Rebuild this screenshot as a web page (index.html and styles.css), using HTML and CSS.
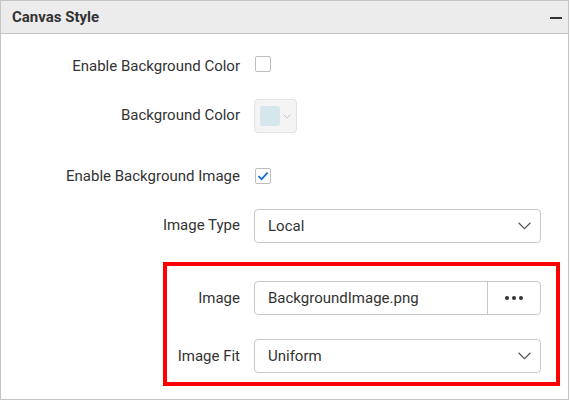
FILE: index.html
```html
<!DOCTYPE html>
<html>
<head>
<meta charset="utf-8">
<link rel="stylesheet" href="styles.css">
</head>
<body>
<div class="panel">
  <div class="header">
    <span class="title">Canvas Style</span>
    <span class="collapse"></span>
  </div>
  <div class="content">
    <div class="row r1">
      <div class="label">Enable Background Color</div>
      <div class="checkbox"></div>
    </div>
    <div class="row r2">
      <div class="label">Background Color</div>
      <div class="colorpicker">
        <span class="swatch"></span>
        <svg class="minichev" width="8" height="5" viewBox="0 0 8 5"><path d="M0.5 0.5 L4 4 L7.5 0.5" fill="none" stroke="#c9c9c9" stroke-width="1"/></svg>
      </div>
    </div>
    <div class="row r3">
      <div class="label">Enable Background Image</div>
      <div class="checkbox">
        <svg width="14" height="14" viewBox="0 0 14 14"><path d="M2.5 7.2 L5.6 10.2 L11.6 3.6" fill="none" stroke="#1a6fd6" stroke-width="1.8"/></svg>
      </div>
    </div>
    <div class="row r4">
      <div class="label">Image Type</div>
      <div class="dropdown">
        <span class="value">Local</span>
        <svg class="chev" width="13" height="8" viewBox="0 0 13 8"><path d="M0.6 0.8 L6.5 6.6 L12.4 0.8" fill="none" stroke="#555" stroke-width="1.2"/></svg>
      </div>
    </div>
    <div class="highlight">
      <div class="row r5">
        <div class="label">Image</div>
        <div class="fileinput">
          <span class="value">BackgroundImage.png</span>
          <span class="browse"><i></i><i></i><i></i></span>
        </div>
      </div>
      <div class="row r6">
        <div class="label">Image Fit</div>
        <div class="dropdown">
          <span class="value">Uniform</span>
          <svg class="chev" width="13" height="8" viewBox="0 0 13 8"><path d="M0.6 0.8 L6.5 6.6 L12.4 0.8" fill="none" stroke="#555" stroke-width="1.2"/></svg>
        </div>
      </div>
    </div>
  </div>
</div>
</body>
</html>
```
FILE: styles.css
```css
html, body {
  margin: 0;
  padding: 0;
  background: #ffffff;
  overflow: hidden;
}
body {
  font-family: Roboto, "Liberation Sans", sans-serif;
  color: #333333;
}
.panel {
  width: 569px;
  height: 400px;
  box-sizing: border-box;
  border: 1px solid #c4c4c4;
}
.header {
  height: 32px;
  background: #ececec;
  border-bottom: 1px solid #c4c4c4;
  display: flex;
  align-items: center;
  justify-content: space-between;
  padding: 0 6px 0 11px;
}
.title {
  font-size: 15px;
  font-weight: 700;
  color: #333333;
  margin-top: -1px;
}
.collapse {
  width: 12px;
  height: 2px;
  background: #333333;
  margin-top: 1px;
}
.content {
  display: flex;
  flex-direction: column;
}
.row {
  display: flex;
  align-items: center;
}
.label {
  width: 239px;
  text-align: right;
  font-size: 15px;
  color: #333333;
  margin-right: 14px;
  flex-shrink: 0;
}
.r1 { margin-top: 22px; height: 16px; }
.r1 .label { padding-top: 3px; }
.r2 { margin-top: 27px; height: 34px; }
.r2 .label { padding-bottom: 3px; }
.r3 { margin-top: 35px; height: 16px; }
.r4 { margin-top: 25px; height: 34px; }
.r4 .label { padding-bottom: 3px; }
.r5 { height: 34px; }
.r6 { margin-top: 24px; height: 34px; }
.r6 .label { padding-bottom: 1px; }

.checkbox {
  width: 16px;
  height: 16px;
  box-sizing: border-box;
  border: 1px solid #bdbdbd;
  border-radius: 2px;
  background: #fff;
  display: flex;
  align-items: center;
  justify-content: center;
  margin-left: 1px;
}
.colorpicker {
  width: 43px;
  height: 34px;
  box-sizing: border-box;
  border: 1px solid #e3e3e3;
  border-radius: 4px;
  background: #f4f4f4;
  display: flex;
  align-items: center;
  padding-left: 5px;
  gap: 3px;
}
.swatch {
  width: 20px;
  height: 20px;
  border-radius: 3px;
  background: #d5e6ec;
}
.dropdown, .fileinput {
  width: 287px;
  height: 34px;
  box-sizing: border-box;
  border: 1px solid #c8c8c8;
  border-radius: 4px;
  background: #fff;
  display: flex;
  align-items: center;
  color: #333333;
}
.dropdown {
  justify-content: space-between;
  padding: 0 9px 0 13px;
}
.value {
  font-size: 15px;
  color: #333333;
}
.fileinput {
  padding-left: 13px;
}
.fileinput .value {
  flex: 1;
}
.browse {
  width: 52px;
  height: 100%;
  border-left: 1px solid #c8c8c8;
  display: flex;
  align-items: center;
  justify-content: center;
  gap: 3px;
}
.browse i {
  width: 4px;
  height: 4px;
  border-radius: 50%;
  background: #333333;
}
.highlight {
  margin-top: 19px;
  margin-left: 162px;
  width: 397px;
  box-sizing: border-box;
  border: 4px solid #ff0000;
  padding: 15px 0 9px 0;
}
.highlight .label {
  width: 73px;
}
```
